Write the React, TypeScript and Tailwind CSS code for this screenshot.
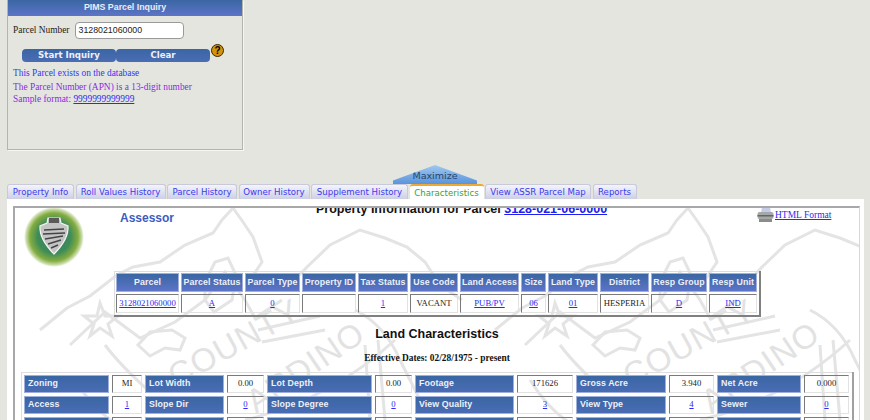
const arial = "font-['Liberation_Sans',Arial,sans-serif]";
const times = "font-['Liberation_Serif','Times_New_Roman',serif]";
const verdana = "font-['DejaVu_Sans',Verdana,sans-serif]";

const link = "text-[#2a2af0] underline";
const head =
  "p-0 h-[19px] text-center align-middle text-[8.8px] tracking-[0.1px] font-bold text-[#eef0f8] bg-gradient-to-b from-[#3a66a3] to-[#5c74c8] border border-[#9fb0dc] " +
  arial;
const cellBase =
  "p-0 text-center align-middle text-[8.7px] text-[#222] border border-t-[#7a7a7a] border-l-[#7a7a7a] border-r-[#e2e2e2] border-b-[#e2e2e2] " +
  times;

const tabs = [
  { t: "Property Info", w: "w-[67px]" },
  { t: "Roll Values History", w: "w-[90px]" },
  { t: "Parcel History", w: "w-[70px]" },
  { t: "Owner History", w: "w-[71px]" },
  { t: "Supplement History", w: "w-[97px]" },
  { t: "Characteristics", w: "w-[74px]", active: true },
  { t: "View ASSR Parcel Map", w: "w-[106px]" },
  { t: "Reports", w: "w-[44px]" },
];

const parcelCols = [63, 62, 55, 54, 50, 48, 59, 25, 50, 49, 56, 48];
const parcelHead = ["Parcel", "Parcel Status", "Parcel Type", "Property ID", "Tax Status", "Use Code", "Land Access", "Size", "Land Type", "District", "Resp Group", "Resp Unit"];
const parcelRow: [string, boolean][] = [
  ["3128021060000", true], ["A", true], ["0", true], ["", false], ["1", true], ["VACANT", false],
  ["PUB/PV", true], ["06", true], ["01", true], ["HESPERIA", false], ["D", true], ["IND", true],
];

const landCols = [85, 30, 79, 37, 105, 37, 99, 56, 90, 45, 84, 45];
const landRows: [string, string, boolean][][] = [
  [["Zoning", "MI", false], ["Lot Width", "0.00", false], ["Lot Depth", "0.00", false], ["Footage", "171626", false], ["Gross Acre", "3.940", false], ["Net Acre", "0.000", false]],
  [["Access", "1", true], ["Slope Dir", "0", true], ["Slope Degree", "0", true], ["View Quality", "3", true], ["View Type", "4", true], ["Sewer", "0", true]],
  [["\u00a0", "\u00a0", false], ["\u00a0", "\u00a0", false], ["\u00a0", "\u00a0", false], ["\u00a0", "\u00a0", false], ["\u00a0", "\u00a0", false], ["\u00a0", "\u00a0", false]],
];

function Seal({ dx, words }: { dx: number; words: boolean }) {
  return (
    <g transform={`translate(${dx} 0)`}>
      <path d="M40 330 L67 308 L90 296 L117 275 L133 267 L160 262 L185 245 L213 233 L222 220 L233 208 L243 222 L253 237 L262 262 L250 280" />
      <path d="M290 285 L307 267 L330 245 L360 230 L385 238 L407 247 L425 262 L440 285 L462 300" />
      <path d="M70 345 L105 312 L140 338 L175 322 L205 300 L225 272 L245 300 L255 318 L282 300" />
      <path d="M138 345 L150 332 L172 330 L185 338 L180 350 L165 348 L150 356 Z" />
      <path d="M205 282 L215 262 L228 258 L236 275 L232 300 L214 312 L205 300 Z" />
      <path d="M100 303 L105 316 L118 316 L108 324 L112 336 L100 328 L90 336 L94 324 L84 316 L97 316 Z" />
      <path d="M258 330 L320 316 M262 342 L325 330" />
      <path d="M75 380 Q100 420 130 430 M105 345 Q120 365 150 392" />
      <path d="M245 420 Q330 400 395 340 M355 310 Q385 325 400 360 L420 400" />
      <path d="M365 345 L370 420 M378 340 L385 420" />
      {words && (
        <>
          <text x="176" y="388" transform="rotate(-29 176 388)" fontSize="33" letterSpacing="1" fontFamily="Liberation Sans, sans-serif" fill="#e2e2e2" stroke="none">
            COUNTY
          </text>
          <text x="256" y="414" transform="rotate(-34 256 414)" fontSize="33" letterSpacing="1" fontFamily="Liberation Sans, sans-serif" fill="#e2e2e2" stroke="none">
            ARDINO
          </text>
        </>
      )}
    </g>
  );
}

export default function App() {
  return (
    <div className={`flex h-[420px] w-[870px] flex-col overflow-hidden bg-[#e4e5df] ${arial}`}>
      {/* Inquiry panel */}
      <div className="ml-[7px] flex h-[150px] w-[236px] shrink-0 flex-col border-x border-b border-[#b4b4ae] shadow-[1px_1px_0_#f6f6f2]">
        <div className={`flex h-[16px] items-center justify-center bg-gradient-to-b from-[#3a66a3] to-[#5c74c8] text-[8.8px] font-bold text-[#e8ecf8] ${arial}`}>
          PIMS Parcel Inquiry
        </div>
        <div className="mt-[6px] flex h-[17px] items-center pl-[5px]">
          <span className={`text-[9.4px] text-[#222] ${times}`}>Parcel Number</span>
          <div className={`ml-[5px] flex h-[17px] w-[109px] items-center rounded-[4px] border-[1.5px] border-[#9a9a9a] bg-white pl-[3px] text-[8.8px] text-[#222] ${arial}`}>
            3128021060000
          </div>
        </div>
        <div className="relative mt-[10px] ml-[14px] flex h-[13px]">
          <div className={`flex h-[13px] w-[94px] items-center justify-center rounded-[4px] bg-gradient-to-b from-[#3a66a3] to-[#4a6cb4] text-[8.6px] font-bold text-[#eef0f8] ${verdana}`}>
            Start Inquiry
          </div>
          <div className={`flex h-[13px] w-[94px] items-center justify-center rounded-[4px] bg-gradient-to-b from-[#3a66a3] to-[#4a6cb4] text-[8.6px] font-bold text-[#eef0f8] ${verdana}`}>
            Clear
          </div>
          <div className={`absolute left-[189px] top-[-5px] flex h-[13px] w-[13px] items-center justify-center rounded-full border border-[#3a2a00] bg-[#d0920f] text-[10px] font-bold text-black ${arial}`}>
            ?
          </div>
        </div>
        <div className={`mt-[5px] pl-[5px] text-[9.4px] leading-[12px] ${times}`}>
          <div className="text-[#3636f5]">This Parcel exists on the database</div>
          <div className="mt-[2px] text-[#8a2be2]">The Parcel Number (APN) is a 13-digit number</div>
          <div className="text-[#8a2be2]">
            Sample format: <span className={link}>9999999999999</span>
          </div>
        </div>
      </div>

      {/* Maximize */}
      <div className="ml-[393px] mt-[15px] h-[19px] w-[84px] shrink-0">
        <div className={`flex h-[19px] w-[84px] items-end justify-center bg-gradient-to-b from-[#a0c8f0] to-[#5a94dc] pb-[1px] text-[9.5px] text-[#26456e] [clip-path:polygon(50%_0,100%_82%,100%_100%,0_100%,0_82%)] ${verdana}`}>
          Maximize
        </div>
      </div>

      {/* Tabs */}
      <div className="ml-[7px] flex h-[15px] shrink-0 gap-[1.5px]">
        {tabs.map((t) => (
          <div
            key={t.t}
            className={`flex h-[15px] ${t.w} shrink-0 items-center justify-center whitespace-nowrap rounded-t-[3px] pt-[1px] text-[8.6px] ${verdana} ${
              t.active
                ? "border-t-2 border-[#f0a830] bg-white text-[#35a335]"
                : "border-x border-t border-[#c8cada] bg-gradient-to-b from-[#f4f4fa] to-[#cdd0e6] text-[#3a3af0]"
            }`}
          >
            {t.t}
          </div>
        ))}
      </div>

      {/* Content */}
      <div className="ml-[7px] flex w-[857px] grow flex-col bg-white pl-[6px] pr-[4px] pt-[7px]">
        <div className="relative grow overflow-hidden border-t-2 border-l-2 border-t-[#a8a8a8] border-l-[#a8a8a8] border-r border-r-[#d8d8d8]">
          <svg
            className="absolute left-[-2px] top-[-2px]"
            width="847"
            height="214"
            viewBox="13 206 847 214"
            fill="none"
            stroke="#e4e4e4"
            strokeWidth="3"
          >
            <Seal dx={-455} words={false} />
            <Seal dx={0} words />
            <Seal dx={455} words />
          </svg>

          <div className="relative">
            {/* Heading row */}
            <div className="flex h-[63px]">
              <div className="ml-[9px] mt-[-1px] h-[60px] w-[60px] shrink-0">
                <svg width="60" height="60" viewBox="0 0 60 60">
                  <defs>
                    <radialGradient id="lg" cx="50%" cy="50%" r="50%">
                      <stop offset="0%" stopColor="#2f7d62" />
                      <stop offset="55%" stopColor="#3f8c58" />
                      <stop offset="80%" stopColor="#84ac40" />
                      <stop offset="93%" stopColor="#c9dcaa" />
                      <stop offset="100%" stopColor="#ffffff" />
                    </radialGradient>
                  </defs>
                  <circle cx="30" cy="30" r="30" fill="url(#lg)" />
                  <path d="M24 11 L36 11 L37 16 L44 19 Q45 32 30 47 Q15 32 16 19 L23 16 Z" fill="#c4c4c4" stroke="#f4f4f4" strokeWidth="1.2" />
                  <path d="M20 23 L40 22 M19 27 L41 26 M21 32 L39 29 M24 37 L37 33 M27 41 L34 38" stroke="#444" strokeWidth="1.4" />
                  <rect x="25" y="11" width="10" height="5" fill="#5a5a5a" />
                </svg>
              </div>
              <div className={`ml-[36px] mt-[3px] w-[196px] shrink-0 text-[12px] font-bold leading-[14px] text-[#3c5cc0] ${arial}`}>
                Assessor
              </div>
              <div className={`mt-[-7px] h-[16px] w-[441px] shrink-0 whitespace-nowrap text-[12.5px] font-bold leading-[16px] text-[#111] ${arial}`}>
                Property Information for Parcel <span className="text-[#2020ee] underline">3128-021-06-0000</span>
              </div>
              <div className="flex h-[18px] items-start">
                <svg width="17" height="16" viewBox="0 0 17 16" className="mt-[-1px] shrink-0">
                  <path d="M5 0 L13 0 L14 6 L4 6 Z" fill="#c4cce8" />
                  <rect x="0.5" y="5" width="16" height="7" rx="2" fill="#a5a8a8" />
                  <rect x="0.5" y="8" width="16" height="1.5" fill="#666" />
                  <rect x="2" y="12" width="13" height="3" fill="#8a8c8c" />
                </svg>
                <span className={`ml-[1px] whitespace-nowrap text-[9.5px] leading-[14px] ${link} ${times}`}>HTML Format</span>
              </div>
            </div>

            {/* Parcel table */}
            <table className="ml-[99px] w-[647px] table-fixed border-separate border-spacing-[2px] border-r-2 border-b-2 border-r-[#808080] border-b-[#808080] shadow-[inset_1px_1px_0_#dddddd]">
              <colgroup>
                {parcelCols.map((w, i) => (
                  <col key={i} style={{ width: w }} />
                ))}
              </colgroup>
              <tbody>
                <tr>
                  {parcelHead.map((h) => (
                    <td key={h} className={`${head} whitespace-nowrap`}>{h}</td>
                  ))}
                </tr>
                <tr>
                  {parcelRow.map(([v, isLink], i) => (
                    <td key={i} className={`${cellBase} h-[19px]`}>
                      {isLink ? <span className={link}>{v}</span> : v}
                    </td>
                  ))}
                </tr>
              </tbody>
            </table>

            <div className={`mt-[9px] text-center text-[12.5px] font-bold leading-[16px] text-[#111] ${arial}`}>
              Land Characteristics
            </div>
            <div className={`mt-[10px] text-center text-[9.4px] font-bold leading-[12px] text-[#111] ${times}`}>
              Effective Dates: 02/28/1975 - present
            </div>

            {/* Land table */}
            <table className="ml-[6px] mt-[8px] w-[833px] table-fixed border-separate border-spacing-[3px] border-r-2 border-r-[#a0a0a0] shadow-[inset_1px_1px_0_#dddddd]">
              <colgroup>
                {landCols.map((w, i) => (
                  <col key={i} style={{ width: w }} />
                ))}
              </colgroup>
              <tbody>
                {landRows.map((row, r) => (
                  <tr key={r}>
                    {row.map(([label, v, isLink], i) => [
                      <td key={`a${i}`} className={`h-[18px] whitespace-nowrap border border-[#9fb0dc] bg-gradient-to-b from-[#3a66a3] to-[#4a6cb4] p-0 pl-[3px] text-left align-middle text-[8.8px] tracking-[0.1px] font-bold text-[#eef0f8] ${arial}`}>
                        {label}
                      </td>,
                      <td key={`b${i}`} className={`${cellBase} h-[18px]`}>
                        {isLink ? <span className={link}>{v}</span> : v}
                      </td>,
                    ])}
                  </tr>
                ))}
              </tbody>
            </table>
          </div>
        </div>
      </div>
    </div>
  );
}
